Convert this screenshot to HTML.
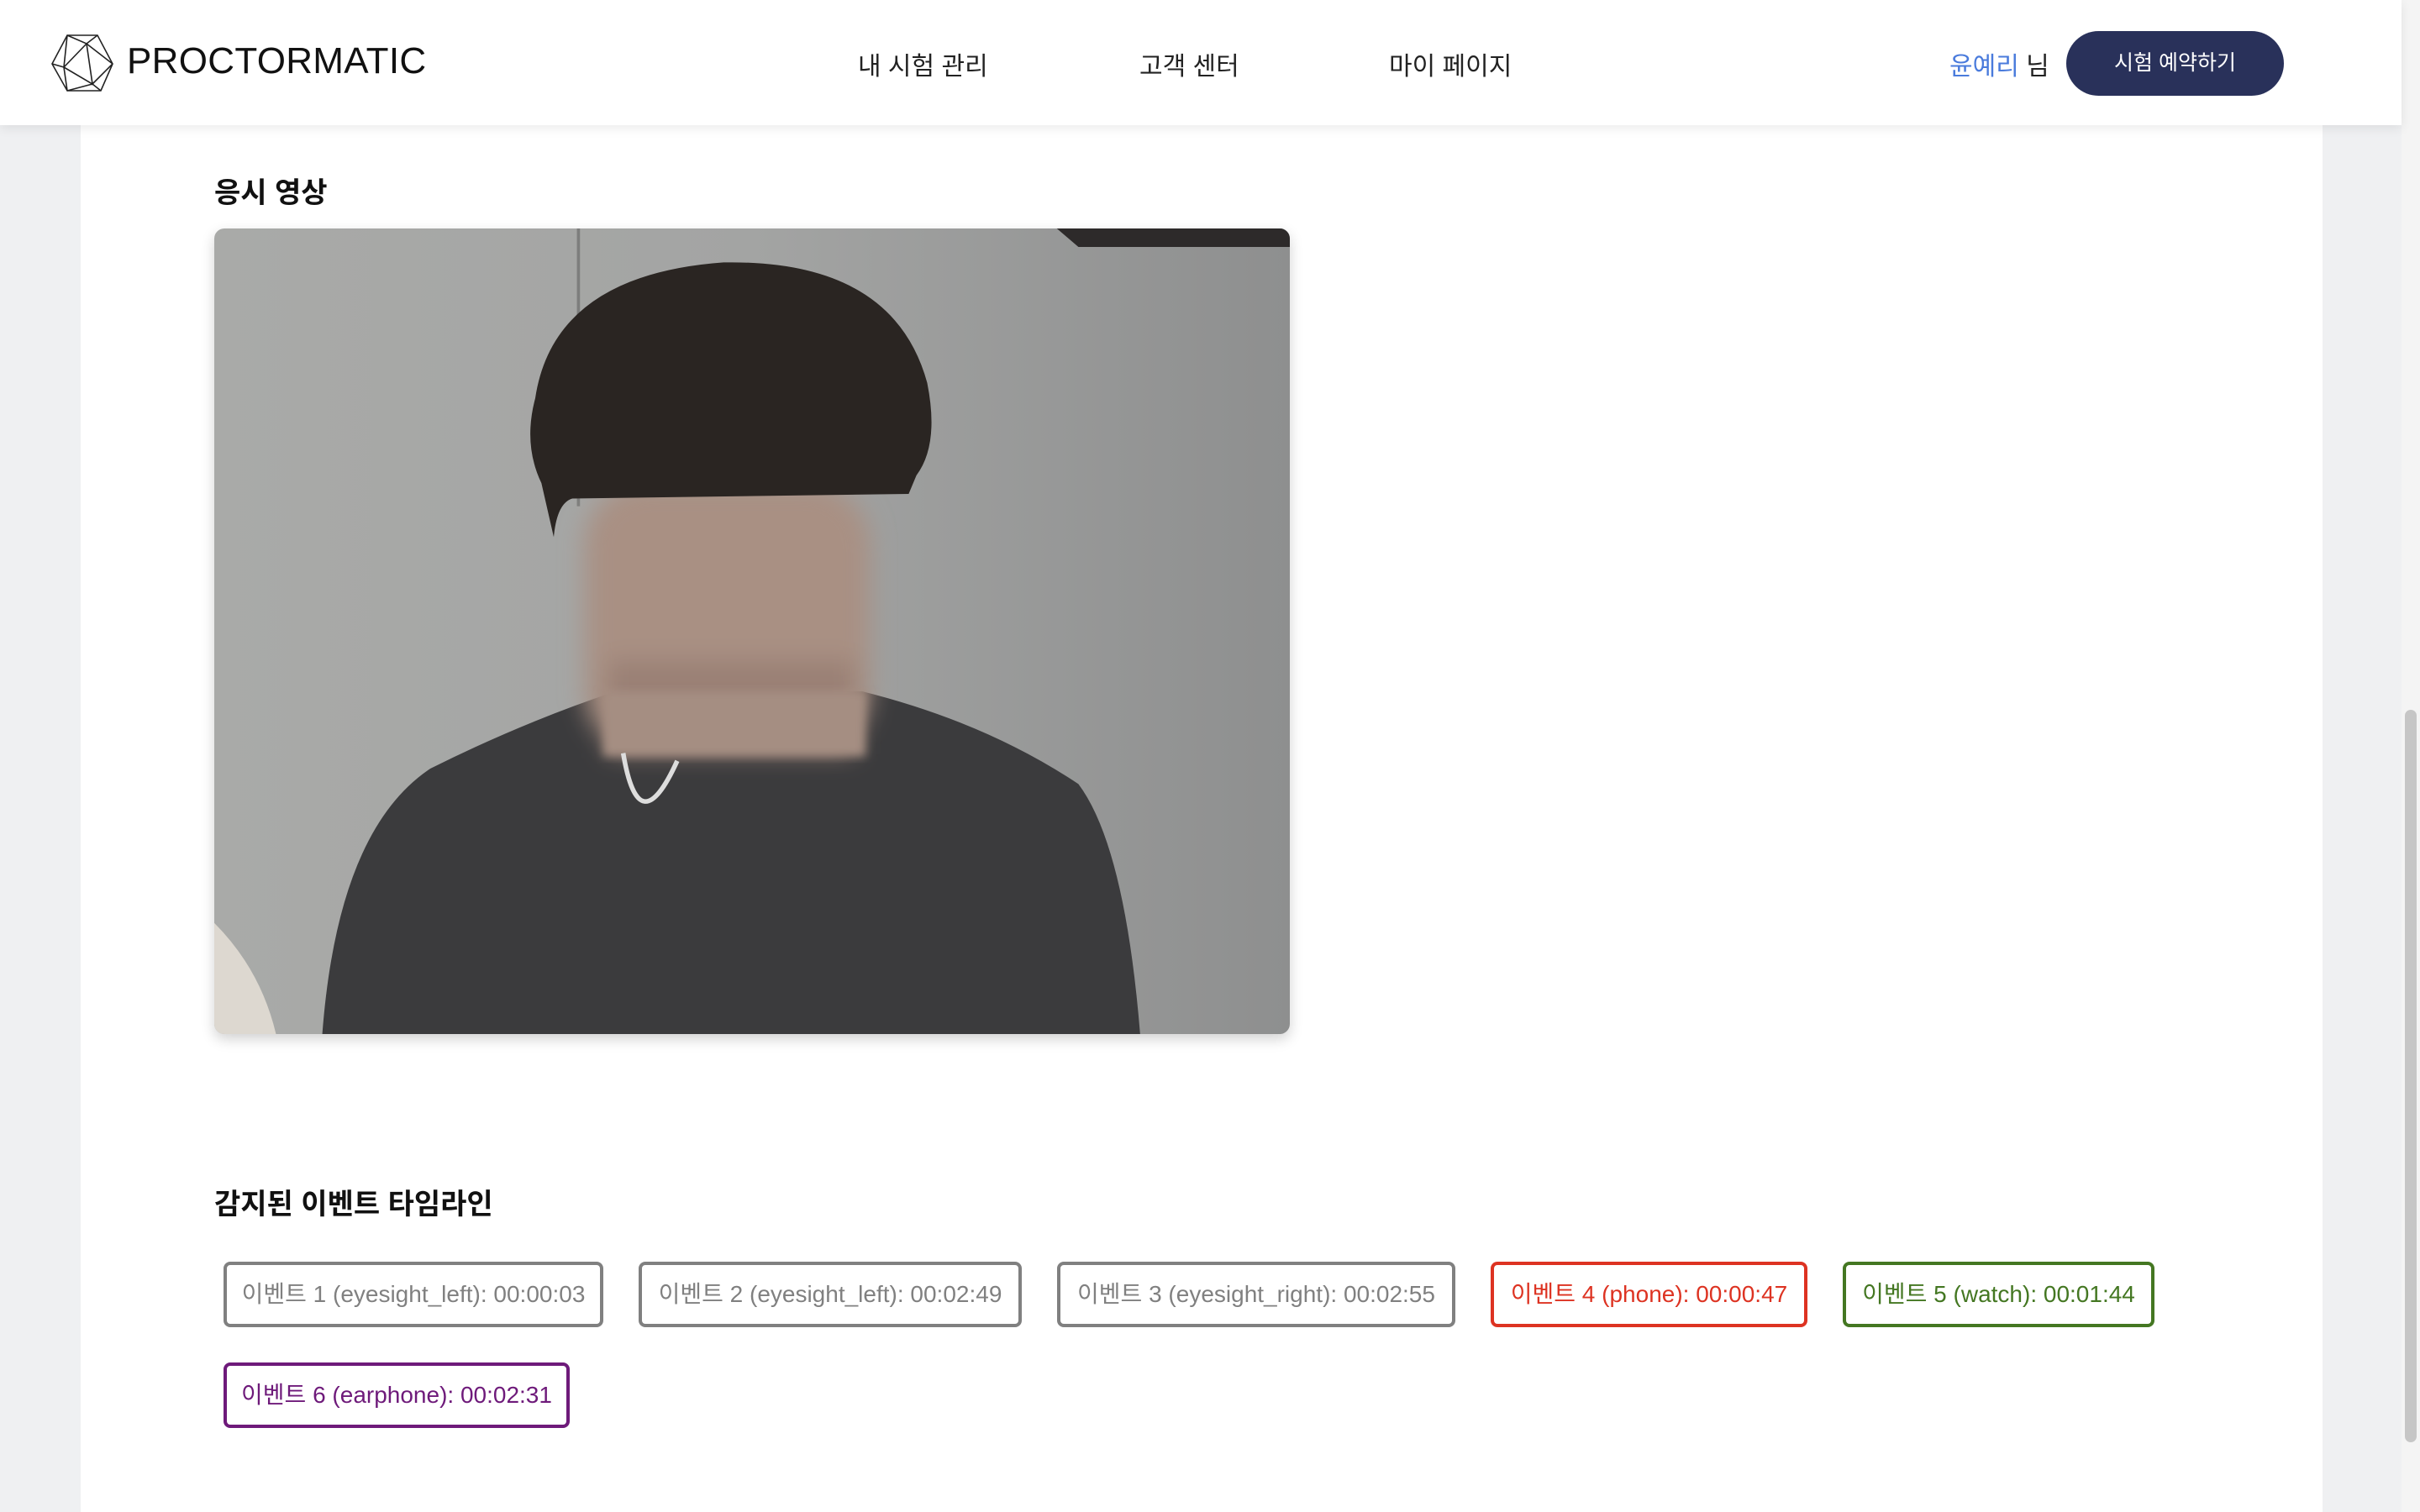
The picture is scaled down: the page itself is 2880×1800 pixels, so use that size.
<!DOCTYPE html>
<html><head><meta charset="utf-8"><style>
*{margin:0;padding:0;box-sizing:border-box}
body{width:2880px;height:1800px;overflow:hidden;background:#eff0f2;font-family:"Liberation Sans","Noto Sans CJK KR",sans-serif;position:relative}
.main{position:absolute;left:96px;top:0;width:2668px;height:1800px;background:#fff}
.hdr{position:absolute;left:0;top:0;width:2858px;height:149px;background:#fff;box-shadow:0 4px 12px rgba(0,0,0,.08);z-index:2}
.logo{position:absolute;left:151px;top:48px;font-size:44px;letter-spacing:0.3px;font-weight:500;color:#111}
.nav{position:absolute;top:54px;font-size:30px;color:#222}
.user{position:absolute;left:2320px;top:54px;font-size:30px;color:#222}
.btn{position:absolute;left:2459px;top:37px;width:259px;height:77px;border-radius:39px;background:#29315a;color:#fff;font-size:25px;text-align:center;line-height:77px}
h2{position:absolute;left:255px;font-size:34px;font-weight:bold;color:#111}
.video{position:absolute;left:255px;top:272px;width:1280px;height:959px;border-radius:12px;overflow:hidden;box-shadow:0 6px 16px rgba(0,0,0,.18)}
.ev{position:absolute;height:78px;border:4px solid #808080;border-radius:8px;color:#808080;font-size:28px;line-height:70px;text-align:center;white-space:nowrap}
.sb{position:absolute;left:2858px;top:0;width:22px;height:1800px;background:#f4f4f4}
.thumb{position:absolute;left:2862px;top:845px;width:14px;height:872px;border-radius:7px;background:#c6c6c6}
</style></head><body>
<div class="main"></div>
<div class="hdr">
 <svg style="position:absolute;left:60px;top:40px" width="76" height="70" viewBox="0 0 76 70" fill="none" stroke="#222" stroke-width="1.6">
  <path d="M20 2 L56 2 L74 36 L60 68 L20 68 L2 36 Z"/>
  <path d="M20 2 L43 12 L56 2 M43 12 L74 36 M43 12 L16 40 L2 36 M43 12 L50 60 L74 36 M16 40 L50 60 L60 68 M50 60 L20 68 M20 2 L16 40 L20 68"/>
 </svg>
 <div class="logo">PROCTORMATIC</div>
 <div class="nav" style="left:1021px">내 시험 관리</div>
 <div class="nav" style="left:1356px">고객 센터</div>
 <div class="nav" style="left:1653px">마이 페이지</div>
 <div class="user"><span style="color:#4a7bdc">윤예리</span> 님</div>
 <div class="btn">시험 예약하기</div>
</div>
<h2 style="top:202px">응시 영상</h2>
<div class="video">
 <svg width="1280" height="959" viewBox="0 0 697 522" preserveAspectRatio="none">
  <defs>
   <linearGradient id="bg" x1="0" x2="1"><stop offset="0" stop-color="#a9aaa8"/><stop offset="0.5" stop-color="#a3a4a3"/><stop offset="1" stop-color="#8e8f8f"/></linearGradient>
   <filter id="b8"><feGaussianBlur stdDeviation="8"/></filter>
   <filter id="b3"><feGaussianBlur stdDeviation="3"/></filter>
  </defs>
  <rect width="697" height="522" fill="url(#bg)"/>
  <rect x="235" y="0" width="2" height="180" fill="#7d7e7d"/>
  <path d="M546 0 L697 0 L697 12 L560 12 Z" fill="#2d2a2a"/>
  <path d="M0 450 Q30 480 40 522 L0 522 Z" fill="#ddd8d0"/>
  <path d="M70 522 Q80 390 140 350 Q200 320 260 300 L420 300 Q500 320 560 360 Q590 400 600 522 Z" fill="#3b3b3d"/>
  <g filter="url(#b8)">
   <rect x="240" y="165" width="185" height="175" rx="40" fill="#a99083"/>
   <rect x="255" y="280" width="160" height="60" fill="#9a8075"/>
  </g>
  <rect x="252" y="300" width="170" height="42" fill="#a58e82" filter="url(#b3)"/>
  <path d="M265 340 Q275 400 300 345" stroke="#ddd" stroke-width="3" fill="none"/>
  <path d="M208 110 Q220 30 330 22 Q440 20 462 100 Q470 140 455 160 L450 172 L232 175 Q222 178 220 200 L212 165 Q200 140 208 110 Z" fill="#2a2522"/>
 </svg>
</div>
<h2 style="top:1406px">감지된 이벤트 타임라인</h2>
<div class="ev" style="left:266px;top:1502px;width:452px">이벤트 1 (eyesight_left): 00:00:03</div>
<div class="ev" style="left:760px;top:1502px;width:456px">이벤트 2 (eyesight_left): 00:02:49</div>
<div class="ev" style="left:1258px;top:1502px;width:474px">이벤트 3 (eyesight_right): 00:02:55</div>
<div class="ev" style="left:1774px;top:1502px;width:377px;border-color:#dd3322;color:#dd3322">이벤트 4 (phone): 00:00:47</div>
<div class="ev" style="left:2193px;top:1502px;width:371px;border-color:#447722;color:#447722">이벤트 5 (watch): 00:01:44</div>
<div class="ev" style="left:266px;top:1622px;width:412px;border-color:#6e1a7a;color:#6e1a7a">이벤트 6 (earphone): 00:02:31</div>
<div class="sb"></div><div class="thumb"></div>
</body></html>
